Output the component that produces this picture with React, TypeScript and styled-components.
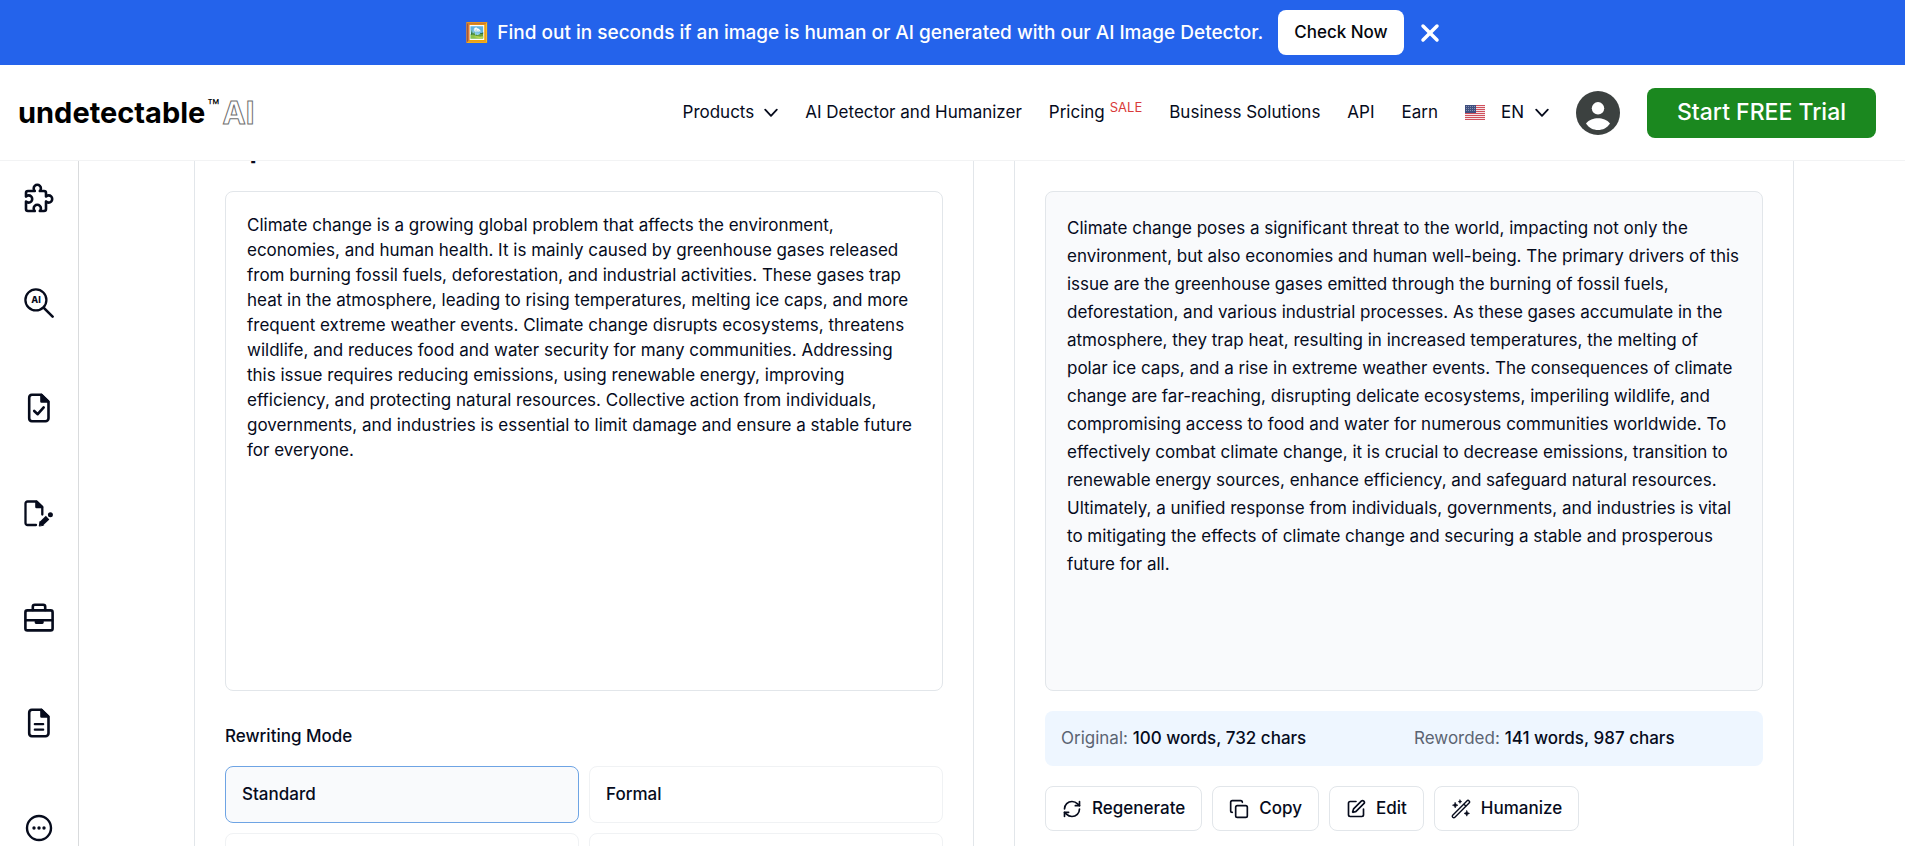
import React, { useState } from 'react';
import styled, { createGlobalStyle } from 'styled-components';
import { Copy, RefreshCw, SquarePen, X } from 'lucide-react';

const ink = '#060b1c';
const line = '#e2e6ea';

const GlobalStyle = createGlobalStyle`
  *, *::before, *::after { box-sizing: border-box; }
  body {
    margin: 0;
    background: #fff;
    color: ${ink};
    font-family: Inter, "Liberation Sans", sans-serif;
    font-size: 17px;
    line-height: 25px;
  }
  button, select, textarea { font: inherit; color: inherit; }
  button { cursor: pointer; }
  a { color: inherit; text-decoration: none; }
  h2, p { margin: 0; }
  svg { display: block; flex: none; }
`;

const Shell = styled.div`
  display: flex;
  flex-direction: column;
  height: 100vh;
  overflow: hidden;
`;

/* Promotion bar */

const Banner = styled.aside`
  flex: none;
  display: flex;
  align-items: center;
  justify-content: center;
  gap: 8px;
  padding: 10px 8px 10px 16px;
  background: #2463eb;
  color: #fff;
  font-size: 19px;
  font-weight: 500;
`;

const BannerButton = styled.button`
  margin-left: 7px;
  height: 45px;
  padding: 0 16px;
  border: 0;
  border-radius: 8px;
  background: #fff;
  color: #05070d;
  font-size: 17px;
  font-weight: 500;
`;

const CloseButton = styled.button`
  padding: 4px;
  border: 0;
  background: none;
  color: #fff;
`;

/* Header */

const Header = styled.header`
  position: relative;
  z-index: 1;
  flex: none;
  display: flex;
  align-items: center;
  justify-content: space-between;
  height: 96px;
  padding: 0 29px 0 18px;
  border-bottom: 1px solid #f2f3f4;
  background: #fff;
`;

const Logo = styled.a`
  display: flex;
  align-items: flex-start;
  color: #000;
  font-size: 29px;
  font-weight: 700;
  line-height: 35px;
`;

const TradeMark = styled.span`
  margin: 0 3px 0 2px;
  font-size: 20px;
  font-weight: 400;
  line-height: 24px;
`;

const LogoOutline = styled.span`
  color: #fff;
  font-size: 31px;
  -webkit-text-stroke: 1px #6f6f6f;
`;

const Nav = styled.nav`
  display: flex;
  align-items: center;
  gap: 27px;
`;

const NavLink = styled.a`
  display: flex;
  align-items: center;
  white-space: nowrap;
`;

const MenuButton = styled.button`
  display: flex;
  align-items: center;
  gap: 10px;
  padding: 0;
  border: 0;
  background: none;
`;

const Sale = styled.span`
  margin-left: 5px;
  align-self: flex-start;
  color: #d93a3a;
  font-size: 13px;
  line-height: 14px;
`;

const Language = styled.label`
  position: relative;
  display: flex;
  align-items: center;
  gap: 16px;
`;

const LanguageSelect = styled.select`
  appearance: none;
  width: 48px;
  padding: 0;
  border: 0;
  background: none;
`;

const LanguageArrow = styled.span`
  position: absolute;
  right: 0;
  pointer-events: none;
`;

const TrialButton = styled.button`
  width: 229px;
  height: 50px;
  border: 0;
  border-radius: 8px;
  background: #1b881f;
  color: #fff;
  font-size: 23px;
  font-weight: 500;
`;

/* Body */

const Body = styled.div`
  flex: 1;
  display: flex;
  min-height: 0;
`;

const Sidebar = styled.nav`
  flex: none;
  display: flex;
  flex-direction: column;
  align-items: center;
  gap: 75px;
  width: 79px;
  padding-top: 22px;
  border-right: 1px solid #d9dbdd;
`;

const Main = styled.main`
  flex: 1;
  display: flex;
  gap: 40px;
  min-width: 0;
  padding: 0 111px 0 115px;
`;

const Panel = styled.section`
  flex: 1 1 0;
  min-width: 0;
  height: 1000px;
  padding: 0 30px;
  border: 1px solid ${line};
  border-top: 0;
`;

/* The panel titles are scrolled up under the header. */
const PanelTitle = styled.h2`
  height: 60px;
  margin-top: -30px;
  font-size: 27px;
  font-weight: 700;
  line-height: 36px;
`;

const SourceText = styled.textarea`
  display: block;
  width: 100%;
  height: 500px;
  padding: 21px;
  border: 1px solid ${line};
  border-radius: 8px;
  background: #fff;
  resize: none;
  outline: 0;
`;

const ResultText = styled.div`
  height: 500px;
  padding: 22px 21px;
  border: 1px solid ${line};
  border-radius: 8px;
  background: #f9fafc;
  line-height: 28px;
`;

const Modes = styled.fieldset`
  min-width: 0;
  margin: 0;
  padding: 0;
  border: 0;
`;

const ModesTitle = styled.legend`
  padding: 33px 0 17px;
  font-weight: 500;
`;

const ModeGrid = styled.div`
  display: grid;
  grid-template-columns: 1fr 1fr;
  gap: 10px;
`;

const ModeOption = styled.label<{ $active: boolean }>`
  display: flex;
  align-items: center;
  height: 57px;
  padding: 0 16px;
  border: 1px solid ${(p) => (p.$active ? '#6ea4e4' : '#f0f2f4')};
  border-radius: 8px;
  background: ${(p) => (p.$active ? '#f9fafc' : '#fff')};
  font-weight: 500;
  cursor: pointer;
`;

const ModeInput = styled.input`
  appearance: none;
  width: 0;
  height: 0;
  margin: 0;
  outline: 0;
`;

const Stats = styled.div`
  display: grid;
  grid-template-columns: 1fr 1fr;
  gap: 20px;
  margin: 20px 0;
  padding: 15px 16px;
  border-radius: 8px;
  background: #eef6ff;
`;

const Stat = styled.p`
  color: #5b6472;
`;

const StatValue = styled.span`
  color: ${ink};
  font-weight: 500;
`;

const Actions = styled.div`
  display: flex;
  flex-wrap: wrap;
  gap: 10px;
`;

const ActionButton = styled.button`
  display: flex;
  align-items: center;
  gap: 10px;
  height: 45px;
  padding: 0 16px;
  border: 1px solid ${line};
  border-radius: 8px;
  background: #fff;
  font-weight: 500;
`;

/* Icons */

const Chevron = () => (
  <svg
    width="14"
    height="10"
    viewBox="0 0 14 10"
    fill="none"
    stroke={ink}
    strokeWidth="1.8"
    strokeLinecap="round"
    strokeLinejoin="round"
    aria-hidden="true"
  >
    <path d="M1.200 1.600L7 7.800L12.800 1.600" />
  </svg>
);

const Flag = () => (
  <svg width="20" height="15" viewBox="0 0 20 15" aria-hidden="true">
    <rect width="20" height="15" fill="#f4e4e6" />
    {[0, 2, 4, 6, 8, 10, 12, 14].map((y) => (
      <rect key={y} y={y} width="20" height="1" fill="#d0505c" />
    ))}
    <rect width="11" height="8" fill="#3f4f7f" />
    {[1, 3, 5].map((y) =>
      [1, 3, 5, 7, 9].map((x) => (
        <rect key={`${x}-${y}`} x={x} y={y} width="1" height="1" fill="#8791b0" />
      )),
    )}
  </svg>
);

const Avatar = () => (
  <svg width="44" height="44" viewBox="0 0 44 44" aria-hidden="true">
    <circle cx="22" cy="22" r="22" fill="#3c4140" />
    <circle cx="22" cy="17.3" r="6.2" fill="#fff" />
    <path d="M10 32.5C13 28.600 17.500 27.200 22 27.200S31 28.600 34 32.500C31 37 26.800 39 22 39S13 37 10 32.500Z" fill="#fff" />
  </svg>
);

const SideSvg = ({ children }: { children: React.ReactNode }) => (
  <svg
    width="30"
    height="30"
    viewBox="0 0 30 30"
    fill="none"
    stroke={ink}
    strokeWidth="2.6"
    strokeLinecap="round"
    strokeLinejoin="round"
    aria-hidden="true"
  >
    {children}
  </svg>
);

const Page = () => (
  <>
    <path d="M8 1.700H17L24.500 8.800V25.300A3 3 0 0 1 21.500 28.300H8A3 3 0 0 1 5.200 25.300V4.700A3 3 0 0 1 8 1.700Z" />
    <path d="M17.500 2V8.500H24Z" fill={ink} />
  </>
);

const tools = [
  {
    label: 'Integrations',
    icon: (
      <path d="M4 8H10.800A3.600 3.600 0 1 1 15.800 8H20A2 2 0 0 1 22 10V13.500A3.600 3.600 0 1 1 22 18.500V26A2 2 0 0 1 20 28H15.800A3.600 3.600 0 1 0 10.800 28H4A2 2 0 0 1 2 26V18.500A3.600 3.600 0 1 0 2 13.500V10A2 2 0 0 1 4 8Z" />
    ),
  },
  {
    label: 'AI detector',
    icon: (
      <>
        <circle cx="11.900" cy="11.900" r="10.500" strokeWidth="2.3" />
        <path d="M19.800 19.800L28.600 28.600" />
        <text x="12" y="15" fill={ink} stroke="none" fontSize="9" fontWeight="800" textAnchor="middle">
          AI
        </text>
      </>
    ),
  },
  {
    label: 'Plagiarism check',
    icon: (
      <>
        <Page />
        <path d="M10.200 18L13.700 21.200L19.700 14.400" />
      </>
    ),
  },
  {
    label: 'Writer',
    icon: (
      <>
        <path d="M12 27H3.500A2 2 0 0 1 1.500 25V5.500A2 2 0 0 1 3.500 3.500H12.500L18.300 9V16.500" strokeWidth="2.3" />
        <path d="M12.500 3.800V9H18Z" fill={ink} />
        <path d="M17.200 25.800L23.600 19.600" strokeWidth="5" strokeLinecap="butt" />
        <path d="M15.300 27.700L16 23.700L19.200 27Z" fill={ink} strokeWidth="1" />
        <circle cx="26.400" cy="16.700" r="2.500" fill={ink} stroke="none" />
      </>
    ),
  },
  {
    label: 'Business tools',
    icon: (
      <>
        <rect x="1.400" y="7.400" width="27.200" height="20" rx="2" />
        <path d="M8.800 7V3.800A2 2 0 0 1 10.800 1.800H19.200A2 2 0 0 1 21.200 3.800V7M2 17.200H28" />
        <path d="M12 17.500H18.400V19.600H12Z" fill={ink} />
      </>
    ),
  },
  {
    label: 'Documents',
    icon: (
      <>
        <Page />
        <path d="M10.800 16.200H19.200M10.800 21.700H19.200" strokeWidth="2.2" />
      </>
    ),
  },
  {
    label: 'More',
    icon: (
      <>
        <circle cx="15" cy="15" r="12" strokeWidth="2.4" />
        {[10, 15, 20].map((x) => (
          <circle key={x} cx={x} cy="15" r="1.700" fill={ink} stroke="none" />
        ))}
      </>
    ),
  },
];

const WandIcon = () => (
  <svg
    width="20"
    height="20"
    viewBox="0 0 20 20"
    fill="none"
    stroke={ink}
    strokeWidth="1.400"
    strokeLinecap="round"
    strokeLinejoin="round"
    aria-hidden="true"
  >
    <path d="M1.700 16.200L15.900 1.900A1.500 1.500 0 0 1 18.100 4.100L3.900 18.300A1.500 1.500 0 0 1 1.700 16.200ZM12.800 5L15 7.200" />
    <path
      d="M4.200 3.400L5.100 5.300L7 6.200L5.100 7.100L4.200 9L3.300 7.100L1.400 6.200L3.300 5.300ZM9 .800L9.600 2L10.800 2.600L9.600 3.200L9 4.400L8.400 3.200L7.200 2.600L8.400 2ZM15.800 11.600L16.700 13.500L18.600 14.400L16.700 15.300L15.800 17.200L14.900 15.300L13 14.400L14.900 13.500Z"
      fill={ink}
      stroke={ink}
      strokeWidth=".5"
    />
  </svg>
);

const sourceText =
  'Climate change is a growing global problem that affects the environment, economies, and human health. It is mainly caused by greenhouse gases released from burning fossil fuels, deforestation, and industrial activities. These gases trap heat in the atmosphere, leading to rising temperatures, melting ice caps, and more frequent extreme weather events. Climate change disrupts ecosystems, threatens wildlife, and reduces food and water security for many communities. Addressing this issue requires reducing emissions, using renewable energy, improving efficiency, and protecting natural resources. Collective action from individuals, governments, and industries is essential to limit damage and ensure a stable future for everyone.';

const resultText =
  'Climate change poses a significant threat to the world, impacting not only the environment, but also economies and human well-being. The primary drivers of this issue are the greenhouse gases emitted through the burning of fossil fuels, deforestation, and various industrial processes. As these gases accumulate in the atmosphere, they trap heat, resulting in increased temperatures, the melting of polar ice caps, and a rise in extreme weather events. The consequences of climate change are far-reaching, disrupting delicate ecosystems, imperiling wildlife, and compromising access to food and water for numerous communities worldwide. To effectively combat climate change, it is crucial to decrease emissions, transition to renewable energy sources, enhance efficiency, and safeguard natural resources. Ultimately, a unified response from individuals, governments, and industries is vital to mitigating the effects of climate change and securing a stable and prosperous future for all.';

const modes = [
  { id: 'standard', name: 'Standard' },
  { id: 'formal', name: 'Formal' },
  { id: 'custom-1', name: '' },
  { id: 'custom-2', name: '' },
];

export default function App() {
  const [text, setText] = useState(sourceText);
  const [mode, setMode] = useState('standard');
  const [bannerOpen, setBannerOpen] = useState(true);

  return (
    <Shell>
      <GlobalStyle />
      {bannerOpen && (
        <Banner>
          <span>🖼️</span>
          <span>Find out in seconds if an image is human or AI generated with our AI Image Detector.</span>
          <BannerButton>Check Now</BannerButton>
          <CloseButton aria-label="Close" onClick={() => setBannerOpen(false)}>
            <X size={28} strokeWidth={3} />
          </CloseButton>
        </Banner>
      )}
      <Header>
        <Logo href="#">
          undetectable
          <TradeMark>™</TradeMark>
          <LogoOutline>AI</LogoOutline>
        </Logo>
        <Nav aria-label="Main">
          <MenuButton>
            Products
            <Chevron />
          </MenuButton>
          <NavLink href="#">AI Detector and Humanizer</NavLink>
          <NavLink href="#">
            Pricing<Sale>SALE</Sale>
          </NavLink>
          <NavLink href="#">Business Solutions</NavLink>
          <NavLink href="#">API</NavLink>
          <NavLink href="#">Earn</NavLink>
          <Language>
            <Flag />
            <LanguageSelect aria-label="Language" defaultValue="EN">
              <option>EN</option>
            </LanguageSelect>
            <LanguageArrow>
              <Chevron />
            </LanguageArrow>
          </Language>
          <NavLink href="#" aria-label="Account">
            <Avatar />
          </NavLink>
          <TrialButton>Start FREE Trial</TrialButton>
        </Nav>
      </Header>
      <Body>
        <Sidebar aria-label="Tools">
          {tools.map((tool) => (
            <a key={tool.label} href="#" aria-label={tool.label}>
              <SideSvg>{tool.icon}</SideSvg>
            </a>
          ))}
        </Sidebar>
        <Main>
          <Panel>
            <PanelTitle>Input</PanelTitle>
            <SourceText
              aria-label="Input"
              spellCheck={false}
              value={text}
              onChange={(e) => setText(e.target.value)}
            />
            <Modes>
              <ModesTitle>Rewriting Mode</ModesTitle>
              <ModeGrid>
                {modes.map(({ id, name }) => (
                  <ModeOption key={id} $active={id === mode}>
                    <ModeInput
                      type="radio"
                      name="mode"
                      aria-label={name || id}
                      checked={id === mode}
                      onChange={() => setMode(id)}
                    />
                    {name}
                  </ModeOption>
                ))}
              </ModeGrid>
            </Modes>
          </Panel>
          <Panel>
            <PanelTitle />
            <ResultText>{resultText}</ResultText>
            <Stats>
              <Stat>
                Original: <StatValue>100 words, 732 chars</StatValue>
              </Stat>
              <Stat>
                Reworded: <StatValue>141 words, 987 chars</StatValue>
              </Stat>
            </Stats>
            <Actions>
              <ActionButton>
                <RefreshCw size={20} strokeWidth={2} />
                Regenerate
              </ActionButton>
              <ActionButton>
                <Copy size={20} strokeWidth={2} />
                Copy
              </ActionButton>
              <ActionButton>
                <SquarePen size={20} strokeWidth={2} />
                Edit
              </ActionButton>
              <ActionButton>
                <WandIcon />
                Humanize
              </ActionButton>
            </Actions>
          </Panel>
        </Main>
      </Body>
    </Shell>
  );
}
